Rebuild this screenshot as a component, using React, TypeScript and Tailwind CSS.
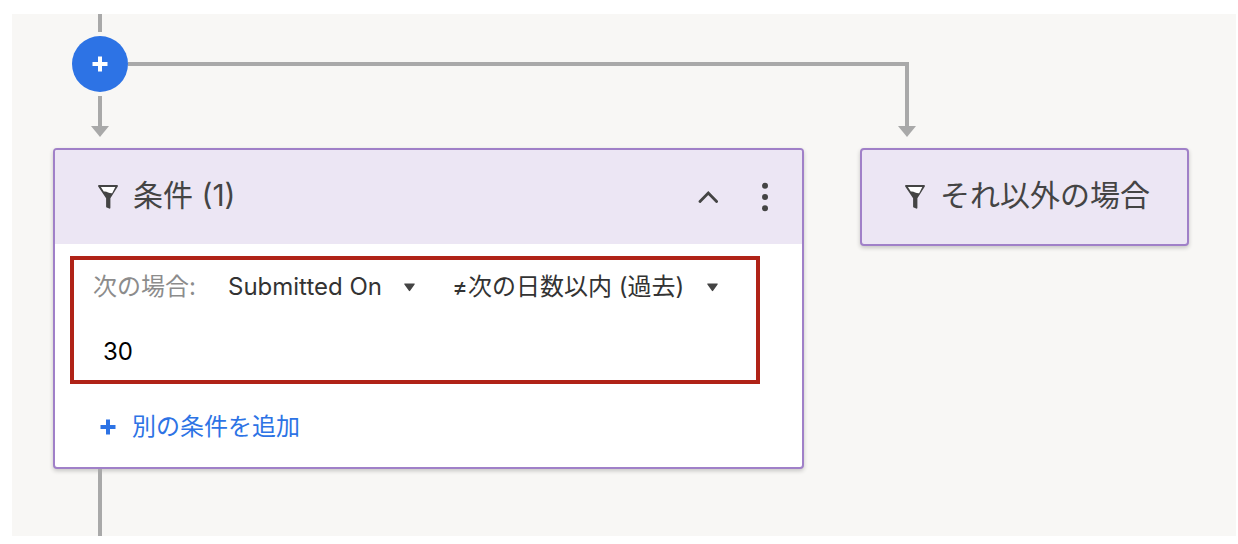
import type { ReactNode } from 'react';

function FunnelIcon() {
  return (
    <svg width="20" height="24" viewBox="0 0 20 24" aria-hidden="true" className="shrink-0">
      <path d="M2 1.5h16L13.500 9H5.500z" fill="#fff" />
      <path
        d="M.9 0h18.2c.7 0 1.100.8.700 1.400L12.400 13.200V22.800c0 .7-.6 1-1.200.8L8.700 22.600c-.4-.2-.6-.5-.6-.9V13.200L.2 1.400C-.2.8.200 0 .9 0Zm2 1.900 2.900 4.700c2.600-.9 5 1.900 8.400 1.600L17.300 1.900Z"
        fill="#444"
        fillRule="evenodd"
      />
    </svg>
  );
}

function PlusIcon() {
  return (
    <svg width="16" height="16" viewBox="0 0 16 16" aria-hidden="true" className="shrink-0">
      <path d="M8 .5v15M.5 8h15" stroke="currentColor" strokeWidth="4" strokeLinecap="butt" />
    </svg>
  );
}

function ArrowHead() {
  return (
    <svg width="18" height="12" viewBox="0 0 18 12" aria-hidden="true" className="shrink-0">
      <path d="M0 0h18L9 11z" fill="#a9a9a9" />
    </svg>
  );
}

function NodeTitle({ children }: { children: ReactNode }) {
  return (
    <div className="flex items-center gap-[15px]">
      <FunnelIcon />
      <h2 className="-mt-1 whitespace-nowrap text-[30px] leading-10 text-[#444]">{children}</h2>
    </div>
  );
}

function Dropdown({ label, value, className }: { label: string; value: string; className: string }) {
  return (
    <div className={`flex items-center ${className}`}>
      <select
        aria-label={label}
        className="h-10 w-full min-w-0 appearance-none bg-transparent pr-3 text-2xl text-[#333] outline-none"
      >
        <option>{value}</option>
      </select>
      <svg width="11" height="9" viewBox="0 0 11 9" aria-hidden="true" className="pointer-events-none -ml-[11px] shrink-0">
        <path d="M.8.500h9.400c.5 0 .7.500.4.900L6.100 7.800c-.3.500-.9.500-1.200 0L.4 1.400C.1 1 .3.500.8.500Z" fill="#444" />
      </svg>
    </div>
  );
}

export default function App() {
  return (
    <main className="bg-white pb-2 pl-3 pr-0.5 pt-[14px] font-['Inter','Noto_Sans_CJK_JP',sans-serif]">
      <div className="bg-[#f8f7f5] px-[41px]">
        <div className="grid h-[134px] grid-cols-[minmax(0,808px)_329px]">
          <div className="flex pl-[19px]">
            <div className="flex w-14 shrink-0 flex-col items-center">
              <div className="h-[18px] w-1 bg-[#a9a9a9]" />
              <button
                type="button"
                aria-label="ステップを追加"
                className="my-1 flex size-14 items-center justify-center rounded-full bg-[#2d73e5] text-white"
              >
                <PlusIcon />
              </button>
              <div className="h-[30px] w-1 bg-[#a9a9a9]" />
              <ArrowHead />
            </div>
            <div className="mt-12 h-1 flex-1 bg-[#a9a9a9]" />
          </div>
          <div className="flex flex-col pt-12">
            <div className="h-16 w-[48px] border-r-4 border-t-4 border-[#a9a9a9]" />
            <div className="pl-[37px]">
              <ArrowHead />
            </div>
          </div>
        </div>

        <div className="grid grid-cols-[minmax(0,751px)_329px] items-start gap-x-14">
          <div>
            <section className="overflow-hidden rounded border-2 border-[#a080c8] bg-white shadow-[0_2px_4px_rgba(0,0,0,0.2)]">
              <header className="flex h-[94px] items-center justify-between bg-[#ece6f4] pl-[43px] pr-[30px]">
                <NodeTitle>条件 (1)</NodeTitle>
                <div className="flex items-center gap-10">
                  <button type="button" aria-label="折りたたむ">
                    <svg width="20" height="14" viewBox="0 0 20 14" aria-hidden="true">
                      <path
                        d="m2 11.500 8.300-8.500 8.300 8.500"
                        fill="none"
                        stroke="#444"
                        strokeWidth="2.800"
                        strokeLinecap="round"
                      />
                    </svg>
                  </button>
                  <button type="button" aria-label="メニュー" className="px-1">
                    <svg width="6" height="30" viewBox="0 0 6 30" aria-hidden="true" fill="#444">
                      <circle cx="3" cy="3.800" r="3" />
                      <circle cx="3" cy="15" r="3" />
                      <circle cx="3" cy="26.200" r="3" />
                    </svg>
                  </button>
                </div>
              </header>

              <div className="pb-5 pl-[15px] pr-[42px] pt-3">
                <div className="flex flex-col gap-6 border-4 border-[#b02318] pb-[9px] pl-[19px] pr-4 pt-[7px] text-2xl">
                  <div className="flex h-10 items-center">
                    <label htmlFor="days" className="w-[135px] shrink-0 whitespace-nowrap text-[#8c8c8c]">
                      次の場合:
                    </label>
                    <Dropdown label="フィールド" value="Submitted On" className="w-[187px] shrink-0" />
                    <Dropdown label="演算子" value="≠次の日数以内 (過去)" className="ml-[37px] w-[266px]" />
                  </div>
                  <input
                    id="days"
                    type="text"
                    defaultValue="30"
                    className="h-10 w-full bg-transparent pl-[10px] text-2xl text-black outline-none"
                  />
                </div>
                <button
                  type="button"
                  className="ml-[30px] mt-[23px] flex h-10 items-center gap-4 text-2xl text-[#2d73e5]"
                >
                  <PlusIcon />
                  別の条件を追加
                </button>
              </div>
            </section>
            <div className="ml-[45px] h-[67px] w-1 bg-[#a9a9a9]" />
          </div>

          <section className="flex h-[98px] items-center rounded border-2 border-[#a080c8] bg-[#ece6f4] pl-[43px] shadow-[0_2px_4px_rgba(0,0,0,0.2)]">
            <NodeTitle>それ以外の場合</NodeTitle>
          </section>
        </div>
      </div>
    </main>
  );
}
